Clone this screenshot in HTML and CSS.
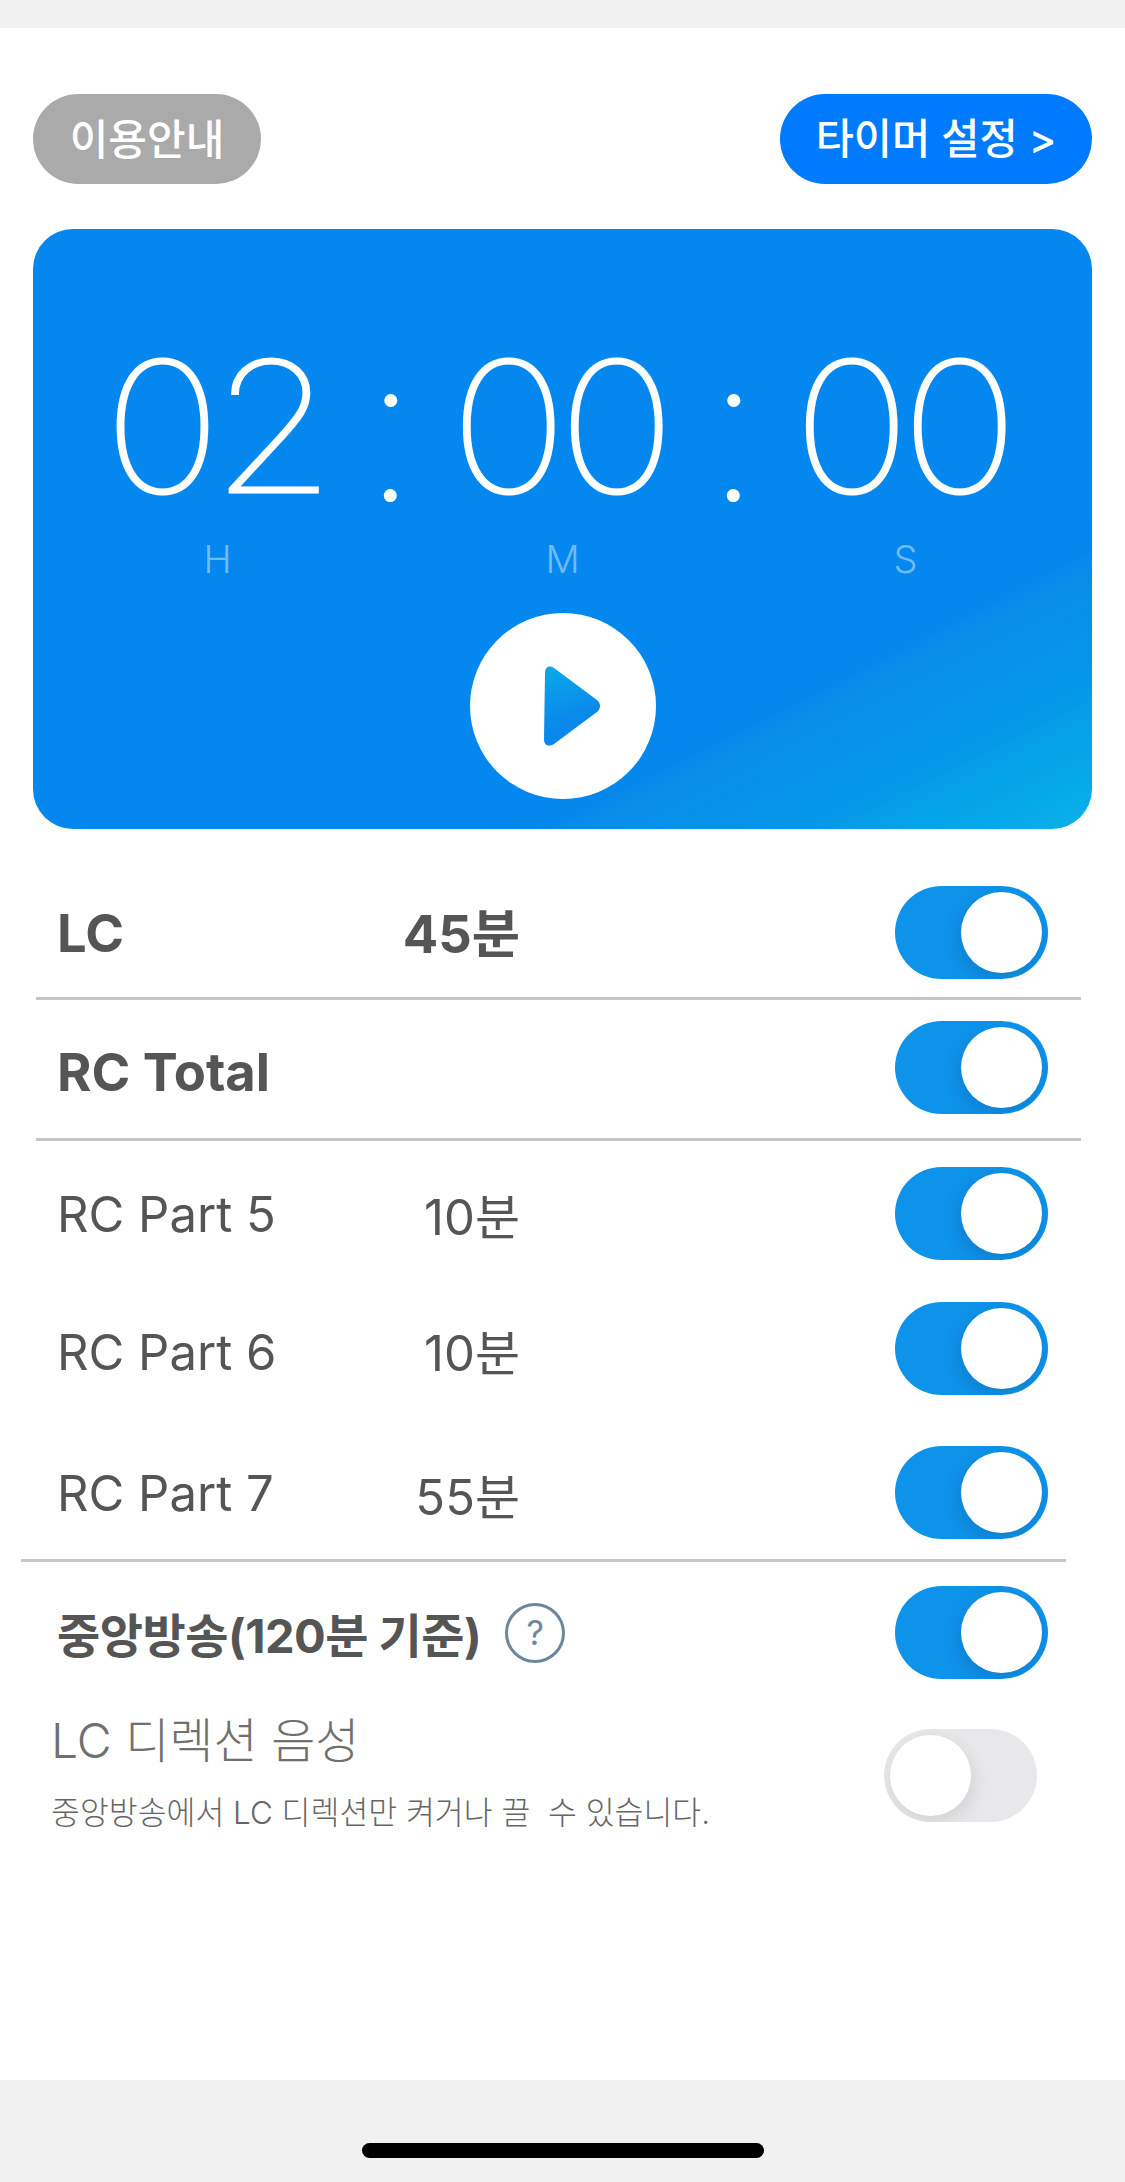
FILE: index.html
```html
<!DOCTYPE html>
<html lang="ko">
<head>
<meta charset="utf-8">
<title>타이머</title>
<link rel="stylesheet" href="styles.css">
</head>
<body>
<div class="phone">
  <div class="status-band"></div>
  <main class="content">
    <div class="top-actions">
      <button class="pill pill-gray">이용안내</button>
      <button class="pill pill-blue">타이머 설정 &gt;</button>
    </div>
    <section class="timer-card">
      <div class="clock">
        <div class="unit"><span class="digits">02</span><span class="unit-label unit-label-h">H</span></div>
        <span class="colon">:</span>
        <div class="unit"><span class="digits">00</span><span class="unit-label">M</span></div>
        <span class="colon">:</span>
        <div class="unit"><span class="digits">00</span><span class="unit-label">S</span></div>
      </div>
      <button class="play" aria-label="시작">
        <svg width="57" height="80" viewBox="0 0 57 80">
          <defs>
            <linearGradient id="playFill" x1="0.3" y1="0" x2="0.5" y2="1">
              <stop offset="0" stop-color="#0aa8e8"/>
              <stop offset="0.6" stop-color="#0a8beb"/>
              <stop offset="1" stop-color="#0a86ec"/>
            </linearGradient>
          </defs>
          <path d="M1 7C1 1 5-1 10 2L53 34C57 37 57 43 53 46L10 78C5 81 0 80 0 73Z" fill="url(#playFill)"/>
        </svg>
      </button>
    </section>

    <div class="row row-lc">
      <span class="name strong">LC</span><span class="mins strong up3">45분</span><span class="toggle on"><i></i></span>
    </div>
    <hr class="rule rule-a">
    <div class="row row-total">
      <span class="name strong down4">RC Total</span><span class="mins"></span><span class="toggle on"><i></i></span>
    </div>
    <hr class="rule rule-b">
    <div class="row row-p5">
      <span class="name down1">RC Part 5</span><span class="mins">10분</span><span class="toggle on"><i></i></span>
    </div>
    <div class="row row-p6">
      <span class="name down4">RC Part 6</span><span class="mins down1">10분</span><span class="toggle on"><i></i></span>
    </div>
    <div class="row row-p7">
      <span class="name down1">RC Part 7</span><span class="mins down1">55분</span><span class="toggle on"><i></i></span>
    </div>
    <hr class="rule rule-c">
    <div class="row row-central">
      <div class="central-name">
        <span class="central-text">중앙방송(120분 기준)</span>
        <span class="help">?</span>
      </div>
      <span class="toggle on"><i></i></span>
    </div>
    <div class="row-voice">
      <div class="voice-text">
        <div class="voice-title">LC 디렉션 음성</div>
        <div class="voice-sub">중앙방송에서 LC 디렉션만 켜거나 끌&nbsp; 수 있습니다.</div>
      </div>
      <span class="toggle off"><i></i></span>
    </div>
  </main>
  <footer class="home-band"><span class="home-bar"></span></footer>
</div>
</body>
</html>
```

FILE: styles.css
```css
* { box-sizing: border-box; }
html, body { margin: 0; padding: 0; background: #fff; }
body { font-family: Inter, "Noto Sans CJK KR", sans-serif; }

.phone { width: 1125px; height: 2182px; display: flex; flex-direction: column; overflow: hidden; }
.status-band { height: 28px; background: #f1f1f1; flex: none; }
.content { flex: 1; padding: 66px 33px 0; background: #fff; }
.home-band { height: 102px; flex: none; background: #f1f1f1; display: flex; justify-content: center; padding-top: 63px; }
.home-bar { width: 402px; height: 15px; border-radius: 8px; background: #000; }

.top-actions { display: flex; justify-content: space-between; height: 90px; }
.pill { border: 0; height: 90px; border-radius: 45px; color: #fff; font-family: Inter, "Noto Sans CJK KR", sans-serif; font-size: 41.5px; font-weight: 500; padding: 0 0 6px; }
.pill-gray { width: 228px; background: #aaa; font-size: 42px; }
.pill-blue { width: 312px; background: #007aff; }

.timer-card {
  height: 600px; margin-top: 45px; border-radius: 40px; position: relative;
  display: flex; flex-direction: column; align-items: center;
  background: linear-gradient(153deg, #0487ee 0%, #0487ee 72%, #0588ec 75.5%, #098dea 77%, #0497e8 87%, #079de8 89%, #03a5e8 92%, #0bb0e8 100%);
}
.clock { display: flex; justify-content: center; align-items: flex-start; margin-top: 108px; height: 276px; width: 100%; }
.unit { display: flex; flex-direction: column; align-items: center; width: 216px; }
.digits { display: block; font-family: Inter, sans-serif; font-weight: 100; font-size: 180px; line-height: 180px; height: 180px; letter-spacing: -8px; margin-left: -8px; color: #fff; -webkit-text-stroke: 3px #fff; transform: scaleX(1.1); }
.unit-label { font-family: Inter, sans-serif; font-weight: 300; font-size: 38px; line-height: 44px; margin-top: 20px; color: rgba(255,255,255,.45); }
.unit-label-h { margin-right: 4px; }
.colon { font-family: Roboto, sans-serif; font-weight: 100; font-size: 203px; line-height: 188px; color: #fff; -webkit-text-stroke: 2px #fff; width: 127px; text-align: center; }
.play { width: 186px; height: 186px; margin-top: 0; border: 0; padding: 0 0 0 19px; border-radius: 50%; background: #fff; display: flex; align-items: center; justify-content: center; }

.row { display: grid; grid-template-columns: 463px 1fr 153px; align-items: center; height: 93px; padding-left: 24px; padding-right: 44px; color: #555; font-size: 49px; font-weight: 400; }
.row-lc { margin-top: 57px; }
.row-total { margin-top: 21px; }
.row-p5 { margin-top: 26px; }
.row-p6 { margin-top: 42px; }
.row-p7 { margin-top: 51px; }
.row-central { margin-top: 24px; grid-template-columns: 1fr 153px; }
.name { white-space: nowrap; }
.mins { justify-self: start; width: 0; direction: rtl; white-space: nowrap; }
.strong { font-weight: 700; font-size: 52.5px; }
.up3 { position: relative; top: -3px; }
.down1 { position: relative; top: 1px; }
.down4 { position: relative; top: 4px; }

.rule { border: 0; height: 3px; background: #c6c6c6; margin: 0; }
.rule-a { margin: 18px 11px 0 3px; }
.rule-b { margin: 24px 11px 0 3px; }
.rule-c { margin: 20px 26px 0 -12px; }

.central-name { display: flex; align-items: center; gap: 24px; }
.central-text { font-size: 47px; font-weight: 700; letter-spacing: -0.5px; white-space: nowrap; }
.help { width: 60px; height: 60px; border: 3px solid #6c879b; border-radius: 50%; display: flex; align-items: center; justify-content: center; color: #6c879b; font-size: 34px; font-weight: 400; }

.row-voice { display: flex; justify-content: space-between; margin-top: 33px; padding-left: 18px; padding-right: 55px; height: 116px; }
.voice-title { font-size: 48px; line-height: 58px; font-weight: 300; color: #707070; white-space: nowrap; }
.voice-sub { font-size: 31.4px; line-height: 40px; margin-top: 23px; font-weight: 300; color: #666; white-space: nowrap; }

.toggle { width: 153px; height: 93px; border-radius: 47px; display: block; overflow: hidden; position: relative; }
.toggle i { position: absolute; top: 6px; width: 81px; height: 81px; border-radius: 50%; background: #fff; }
.toggle.on { background: #0e93ea; }
.toggle.on i { right: 6px; box-shadow: -2px 6px 18px rgba(0,40,90,.18); }
.toggle.off { background: #e8e8ea; margin-top: 17px; }
.toggle.off i { left: 6px; box-shadow: 2px 6px 18px rgba(0,0,0,.1); }
```
